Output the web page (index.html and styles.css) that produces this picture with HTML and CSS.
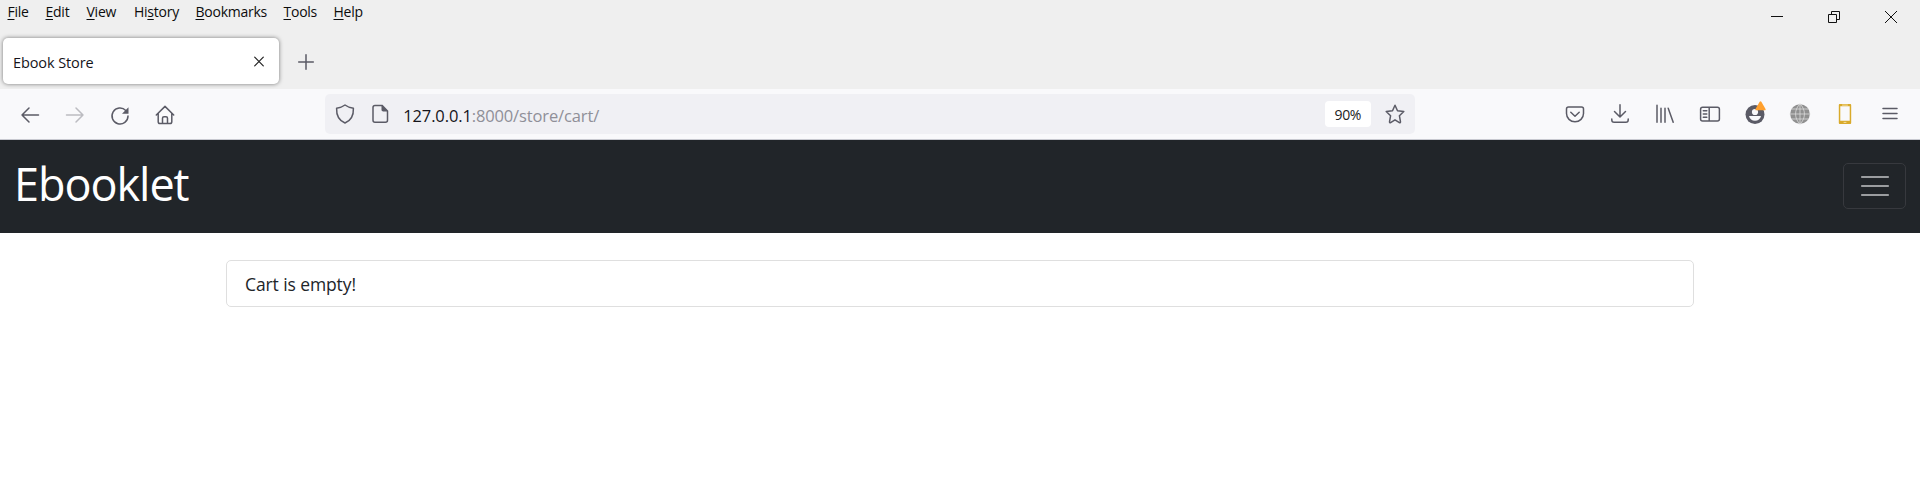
FILE: index.html
```html
<!DOCTYPE html>
<html lang="en">
<head>
<meta charset="utf-8">
<title>Ebook Store</title>
<link rel="stylesheet" href="styles.css">
</head>
<body>
<header class="titlebar">
  <nav class="menubar">
    <span class="menu-file"><u>F</u>ile</span><span class="menu-edit"><u>E</u>dit</span><span class="menu-view"><u>V</u>iew</span><span class="menu-history">Hi<u>s</u>tory</span><span class="menu-bookmarks"><u>B</u>ookmarks</span><span class="menu-tools"><u>T</u>ools</span><span class="menu-help"><u>H</u>elp</span>
  </nav>
  <div class="window-controls">
    <svg width="14" height="14" viewBox="0 0 14 14"><path d="M1 6.5h12"/></svg>
    <svg width="14" height="14" viewBox="0 0 14 14"><path d="M1.500 4.500h8v8h-8zM4.500 4.500v-3h8v8h-3"/></svg>
    <svg width="14" height="14" viewBox="0 0 14 14"><path d="M1 1l12 12M13 1L1 13"/></svg>
  </div>
</header>
<div class="tabs">
  <div class="tab"><span class="tab-title">Ebook Store</span><svg width="10" height="10" viewBox="0 0 10 10"><path d="M.7 1.200l8.600 8.600M9.300 1.200L.7 9.800"/></svg></div>
  <svg class="new-tab" width="16" height="16" viewBox="0 0 16 16"><path d="M8 .7v14.600M.7 8h14.600"/></svg>
</div>
<div class="toolbar">
  <div class="icons">
    <svg viewBox="0 0 20 20"><path d="M18.500 10H2M9 3l-7 7 7 7"/></svg>
    <svg class="disabled" viewBox="0 0 20 20"><path d="M1.500 10H18M11 3l7 7-7 7"/></svg>
    <svg viewBox="0 0 20 20"><path d="M15.800 5.500A8 8 0 1 0 18 11"/><path class="solid" d="M18.500 2.300v6.500h-6.500z"/></svg>
    <svg viewBox="0 0 20 20"><path d="M1.300 10L10 1.400l8.700 8.600M3.200 8.400v8.300c0 1 .8 1.800 1.800 1.800h10c1 0 1.800-.8 1.800-1.800V8.400M7.500 18.300v-5c0-1 .7-1.600 1.500-1.600h2c.8 0 1.500.6 1.500 1.600v5"/></svg>
  </div>
  <div class="urlbar">
    <svg class="shield" viewBox="0 0 20 20"><path d="M10 1c2.500 1.900 5 2.700 8.400 3.200.3 6.800-1.800 12-8.400 14.800C3.400 16.200 1.300 11 1.600 4.200 5 3.700 7.500 2.900 10 1z"/></svg>
    <svg class="page" viewBox="0 0 20 20"><path d="M12 1.400H5c-1.200 0-2 .8-2 2v12.800c0 1.200.8 2 2 2h10.500c1.200 0 2-.8 2-2V7z"/><path class="solid" d="M11.500 1v4.800c0 1 .8 1.700 1.700 1.700h4.800z"/></svg>
    <span class="url"><b>127.0.0.1</b>:8000/store/cart/</span>
    <span class="zoom">90%</span>
    <svg class="star" viewBox="0 0 20 20"><path d="M10 1.200l2.500 5.500 6.300.8-4.400 4.200 1.100 6.100c.1.700-.5 1.100-1.100.8L10 15.800l-4.400 2.800c-.6.300-1.200-.1-1.100-.8l1.100-6.100-4.400-4.200 6.300-.8z"/></svg>
  </div>
  <div class="icons">
    <svg viewBox="0 0 20 20"><path d="M3.500 3h13c1.200 0 2 .8 2 2v4.500a8.500 8.300 0 0 1-17 0V5c0-1.200.8-2 2-2zM5.800 8.200l4.200 4 4.200-4"/></svg>
    <svg viewBox="0 0 20 20"><path d="M10 .8v12M4.500 7.500l5.500 5.500 5.500-5.500M1.800 15v1c0 1.500.8 2.300 2.300 2.300h11.800c1.500 0 2.300-.8 2.300-2.300v-1"/></svg>
    <svg viewBox="0 0 20 20"><path d="M2 1.300v17M6 4.300v14M10 4.300v14M13.200 4.300l5 14"/></svg>
    <svg viewBox="0 0 20 20"><path d="M2.600 3.300h14.800c1.200 0 2 .8 2 2v9.800c0 1.200-.8 2-2 2H2.600c-1.200 0-2-.8-2-2V5.300c0-1.200.8-2 2-2zM9.200 3.300v13.800M3.300 6.800h3.500M3.300 10h3.500M3.300 13.200h3.500"/></svg>
    <svg viewBox="0 0 20 20"><circle class="solid" cx="10" cy="10.500" r="9.500"/><circle class="light" cx="10" cy="8" r="3.100"/><path class="light" d="M4 12h12c-.7 3-3 4.800-6 4.800S4.700 15 4 12z"/><path class="alert" d="M14.500-2c.6-1 1.400-1 2 0l4 7c.4.8 0 1.300-.8 1.300h-8.400c-.8 0-1.200-.5-.8-1.300z"/></svg>
    <svg viewBox="0 0 20 20"><circle class="globe" cx="10" cy="10" r="9.800"/><path class="grid" d="M10 0v20M0 10h20M1.500 5h17M1.500 15h17M10 0c-6 5-6 15 0 20M10 0c6 5 6 15 0 20"/></svg>
    <svg viewBox="0 0 20 20"><path class="phone" fill-rule="evenodd" d="M5 0h10c.8 0 1.200.4 1.200 1.200v17.600c0 .8-.4 1.200-1.200 1.200H5c-.8 0-1.200-.4-1.200-1.200V1.200C3.800.4 4.200 0 5 0zm.3 2.200v14.600h9.400V2.200z"/><path class="phone-mark" d="M7.500 1.100h5M9 18.400h2"/></svg>
    <svg viewBox="0 0 20 20"><path d="M3 4.500h14M3 9.500h14M3 14.500h14"/></svg>
  </div>
</div>
<nav class="navbar">
  <span class="brand">Ebooklet</span>
  <button class="toggler" aria-label="Toggle navigation"><svg width="28" height="22" viewBox="0 0 28 22"><path d="M1 2h26M1 11h26M1 20h26"/></svg></button>
</nav>
<main class="container"><div class="card">Cart is empty!</div></main>
</body>
</html>
```
FILE: styles.css
```css
* { box-sizing: border-box; }
body { margin: 0; background: #fff; font-family: "Open Sans", "Noto Sans", sans-serif; color: #212529; }
svg { display: block; flex: none; overflow: visible; fill: none; stroke: #5b5b66; stroke-width: 1.5; stroke-linecap: round; stroke-linejoin: round; }
.titlebar { height: 38px; background: #efefef; display: flex; justify-content: space-between; }
.menubar { display: flex; padding-left: 7.500px; color: #0c0c0c; font-size: 14px; line-height: 24px; letter-spacing: -.25px; white-space: nowrap; }
.menubar u { text-underline-offset: 2px; text-decoration-thickness: 1px; }
.menu-file { width: 38px; }
.menu-edit { width: 41px; }
.menu-view { width: 47.5px; }
.menu-history { width: 61.5px; }
.menu-bookmarks { width: 88px; letter-spacing: -.25px; }
.menu-tools { width: 50px; }
.window-controls { display: flex; gap: 43px; padding: 10px 22px 0 0; }
.window-controls svg { stroke: #111; stroke-width: 1; stroke-linecap: butt; stroke-linejoin: miter; }
.tabs { height: 51px; background: #efefef; display: flex; padding-left: 3px; }
.tab { width: 276px; height: 46px; display: flex; align-items: center; justify-content: space-between; padding: 0 15px 0 10px; border-radius: 5px; background: #fff; box-shadow: 0 0 4px rgba(0, 0, 0, .5); }
.tab svg { stroke: #222; stroke-width: 1.2; }
.tab-title { color: #15141a; font-size: 14.500px; letter-spacing: -.1px; padding-top: 2px; }
.new-tab { margin: 16px 0 0 18.500px; }
.toolbar { height: 51px; display: flex; align-items: center; justify-content: space-between; padding: 0 8px; background: #f9f9fb; border-bottom: 1px solid #c8c9d0; }
.icons { display: flex; }
.icons svg { width: 20px; height: 20px; margin: 0 12.450px; }
.icons:first-child svg { position: relative; top: .5px; }
.icons .disabled { stroke: #bcbcc1; }
.solid { fill: #5b5b66; stroke: none; }
.light { fill: #f9f9fb; stroke: none; }
.alert { fill: #ffa02e; stroke: none; }
.globe { fill: #909090; stroke: none; }
.grid { stroke: #dadada; stroke-width: .8; }
.phone { fill: #d9aa2b; stroke: none; }
.phone-mark { stroke: #f3dda0; stroke-width: 1; }
.urlbar { width: 1090px; height: 40px; margin-right: 0; display: flex; align-items: center; padding: 0 10px; border-radius: 5px; background: #f0f0f4; }
.urlbar svg { width: 20px; height: 20px; }
.page { margin-left: 15px; }
.url { flex: 1; padding: 3px 0 0 13px; font-size: 16.500px; letter-spacing: -.13px; color: #8f8f98; }
.url b { font-weight: 400; color: #15141a; }
.zoom { width: 46px; height: 26px; line-height: 27px; border-radius: 4px; background: #fff; color: #222; text-align: center; font-size: 14px; letter-spacing: -.4px; margin-right: 14.500px; }
.navbar { height: 93px; background: #212529; display: flex; align-items: center; justify-content: space-between; padding: 0 14px; }
.brand { color: #fff; font-size: 45px; line-height: 60px; letter-spacing: -1.050px; padding-bottom: 5px; }
.toggler { width: 63px; height: 46px; display: grid; place-items: center; padding: 0; margin-bottom: 1px; border: 1px solid #37393e; border-radius: 5px; background: none; }
.toggler svg { stroke: #9b9da0; stroke-width: 2.200; }
.container { padding: 27px 226px 0; }
.card { height: 47px; border: 1px solid #dfdfdf; border-radius: 5px; padding-left: 18px; font-size: 17.500px; line-height: 47px; letter-spacing: -.1px; }
```
